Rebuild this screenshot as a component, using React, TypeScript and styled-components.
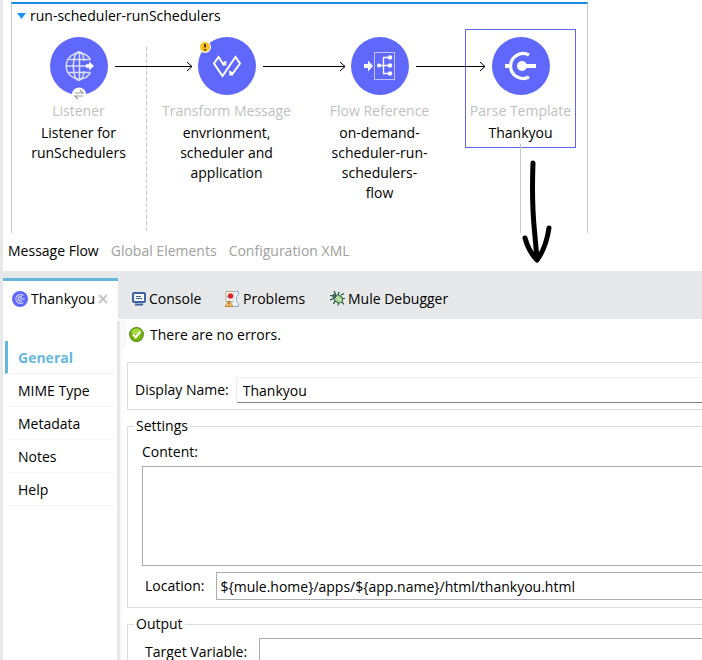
import React from "react";
import styled, { createGlobalStyle, css } from "styled-components";

const Global = createGlobalStyle`
  *, *::before, *::after { box-sizing: border-box; }
  body { margin: 0; background: #fff; }
  body, button, input, textarea {
    font-family: "Open Sans", "Noto Sans", sans-serif;
    font-size: 14px;
    line-height: 20px;
    color: #000;
  }
  button { padding: 0; border: 0; background: none; cursor: pointer; }
`;

const Window = styled.div`
  display: flex;
  flex-direction: column;
  height: 100vh;
  overflow: hidden;
  border-left: 3px solid #e7e8ea;
`;

/* ---------- Flow canvas ---------- */

const Canvas = styled.section`
  flex: none;
  padding: 2px 0 8px 8px;
`;

const Lane = styled.div`
  position: relative;
  width: 577px;
  height: 231px;
  border: solid #c8c8c8;
  border-width: 2px 1px 0;
  border-top-color: #1a8ceb;
`;

const LaneTitle = styled.button`
  display: flex;
  align-items: center;
  gap: 4px;
  padding: 2px 5px;
`;

const LaneArt = styled.svg`
  position: absolute;
  left: -1px;
  top: 0;
  overflow: visible;
  pointer-events: none;
`;

const Node = styled.div<{ $x: number; $selected?: boolean }>`
  position: absolute;
  top: 25px;
  left: ${(p) => p.$x}px;
  width: 111px;
  height: 119px;
  border: 1px solid ${(p) => (p.$selected ? "#5f66e8" : "transparent")};
  display: flex;
  flex-direction: column;
  align-items: center;
  padding-top: 7px;
  text-align: center;
`;

const NodeType = styled.span`
  margin: 6px 0 2px;
  flex: none;
  color: #bfbfbf;
  white-space: nowrap;
`;

const NodeName = styled.span`
  flex: none;
  white-space: pre-line;
`;

const NodeIcon = styled.svg`
  flex: none;
  overflow: visible;
`;

const Sketch = styled.svg`
  position: absolute;
  left: 508px;
  top: 153px;
  overflow: visible;
  pointer-events: none;
`;

const ViewTabs = styled.nav`
  flex: none;
  display: flex;
  gap: 12px;
  height: 30px;
  padding-left: 5px;
`;

const ViewTab = styled.button<{ $active?: boolean }>`
  height: 20px;
  color: ${(p) => (p.$active ? "#000" : "#a0a0a0")};
`;

/* ---------- Lower panel ---------- */

const TabBar = styled.div`
  flex: none;
  display: flex;
  height: 48px;
  padding-top: 7px;
  background: #e7e8ea;
`;

const PanelTab = styled.button<{ $active?: boolean; $width: number }>`
  display: flex;
  align-items: center;
  gap: 3px;
  width: ${(p) => p.$width}px;
  white-space: nowrap;
  ${(p) =>
    p.$active &&
    css`
      padding-left: 9px;
      margin-right: 14px;
      padding-bottom: 3px;
      border-top: 3px solid #67b7dc;
      background: #fff;
    `}
`;

const Panel = styled.div`
  flex: 1;
  min-height: 0;
  display: flex;
  padding-top: 2px;
`;

const Sidebar = styled.nav`
  flex: none;
  width: 117px;
  padding: 20px 1px 0 2px;
  border-right: 3px solid #e7e7e7;
`;

const SideItem = styled.button<{ $active?: boolean }>`
  display: block;
  width: 100%;
  height: 33px;
  padding-top: 2px;
  padding-left: ${(p) => (p.$active ? 10 : 13)}px;
  text-align: left;
  border-bottom: 1px solid #f5f5f5;
  ${(p) =>
    p.$active &&
    css`
      color: #67b7dc;
      font-weight: 700;
      border-left: 3px solid #67b7dc;
    `}
`;

const Form = styled.form`
  flex: 1;
  min-width: 0;
  border-left: 2px solid #f8f8f8;
`;

const Status = styled.div`
  display: flex;
  align-items: center;
  gap: 6px;
  height: 26px;
  padding-top: 1px;
  padding-left: 3px;
  border-left: 4px solid #f8f8f8;
`;

const Group = styled.fieldset<{ $spaced?: boolean }>`
  min-width: 0;
  margin: ${(p) => (p.$spaced ? "6px 0 0 5px" : "15px 0 0 5px")};
  padding: ${(p) => (p.$spaced ? "4px 0 7px 6px" : "14px 0 6px 7px")};
  border: 1px solid #dcdcdc;
  border-right: 0;
`;

const Legend = styled.legend`
  padding: 0 2px;
`;

const Field = styled.div<{ $indent?: boolean; $gap: number }>`
  display: flex;
  align-items: center;
  gap: ${(p) => p.$gap}px;
  padding-left: ${(p) => (p.$indent ? 11 : 0)}px;
`;

const FieldLabel = styled.label`
  flex: none;
`;

const LineInput = styled.input`
  flex: 1;
  min-width: 0;
  height: 26px;
  padding: 0 6px;
  border: solid #ececec;
  border-width: 1px 0 1px 1px;
  border-bottom-color: #808080;
  border-radius: 2px 0 0 2px;
  outline: 0;
`;

const BoxInput = styled.input`
  flex: 1;
  min-width: 0;
  height: 28px;
  padding: 0 3px;
  border: 1px solid #ababb0;
  border-right: 0;
  outline: 0;
`;

const Content = styled.div`
  display: flex;
  flex-direction: column;
  gap: 4px;
  padding: 2px 0 6px 8px;
`;

const TextBox = styled.textarea`
  height: 100px;
  border: 1px solid #ababb0;
  border-right: 0;
  resize: none;
  outline: 0;
`;

/* ---------- Icons ---------- */

const Disc = ({ children }: { children: React.ReactNode }) => (
  <NodeIcon width="58" height="58" viewBox="0 0 58 58" aria-hidden="true">
    <circle cx="29" cy="29" r="29" fill="#5f68fb" />
    {children}
  </NodeIcon>
);

const Warning = () => (
  <g>
    <circle cx="7" cy="10" r="6" fill="#fff" />
    <circle cx="7" cy="10" r="5" fill="#f8c022" />
    <path d="M7 7v3.6M7 12v1.6" stroke="#3d3209" strokeWidth="1.8" />
  </g>
);

const ListenerIcon = () => (
  <Disc>
    <g fill="none" stroke="#dddffe" strokeWidth="1.5">
      <path d="M40.5 22.5A13 13 0 1 0 40.5 35.5" />
      <path d="M34 24C33 12 26 12 24 22Q22.500 29 24 36C26 46 33 46 34 34" />
      <path d="M29.500 16V42M16.500 29H36M19 22.500H40.500M19 35.500H40.500" />
    </g>
    <path d="M36 27.200h3v-2.700l5 4.500-5 4.500v-2.700h-3z" fill="#fff" />
    <circle cx="29" cy="57.500" r="7" fill="#fff" />
    <path d="M25 56h8l-3-3M33 59h-8l3 3" fill="none" stroke="#999" strokeWidth="1.200" />
  </Disc>
);

const TransformIcon = () => (
  <Disc>
    <path
      d="M27.500 24.500 25.500 27.500 20.500 20 16 26.500 24.500 39 37.500 20 42 26.500 34 37.500 32 34.500"
      fill="none"
      stroke="#fff"
      strokeWidth="2"
    />
    <path d="M23.500 26.500l5-2.500-.5 5zM31 33.500l.5 5.500 4-3z" fill="#fff" />
    <Warning />
  </Disc>
);

const FlowRefIcon = () => (
  <Disc>
    <rect x="23.500" y="15.500" width="20" height="27" fill="none" stroke="#bfc2fd" />
    <path d="M13 27h4v-3.500l5 5.500-5 5.500V31h-4z" fill="#fff" />
    <path d="M28 28.500H39M38 20.500H32.500V36.500H38" fill="none" stroke="#fff" strokeWidth="1.300" />
    <g fill="#fff">
      <circle cx="28" cy="28.500" r="2" />
      <circle cx="39" cy="20.500" r="2.200" />
      <circle cx="39" cy="28.500" r="2.200" />
      <circle cx="39" cy="36.500" r="2.200" />
    </g>
  </Disc>
);

const ParseIcon = () => (
  <Disc>
    <path d="M37 18A12.500 12.500 0 1 0 37 40" fill="none" stroke="#fff" strokeWidth="3.200" />
    <path d="M13 29h4M30 29h14" stroke="#fff" strokeWidth="4" />
    <circle cx="30" cy="29" r="5" fill="#fff" />
  </Disc>
);

const SmallParse = () => (
  <svg width="16" height="16" viewBox="0 0 58 58" aria-hidden="true">
    <circle cx="29" cy="29" r="29" fill="#5f68fb" />
    <path d="M41 17A16 16 0 1 0 41 41M36 23A8 8 0 1 0 36 35M27 29H46" fill="none" stroke="#dfe1ff" strokeWidth="4" />
  </svg>
);

const ConsoleIcon = () => (
  <svg width="14" height="14" viewBox="0 0 14 14" aria-hidden="true">
    <rect x="1" y="1" width="12" height="9" rx="1" fill="#f4f8ff" stroke="#3d63a5" strokeWidth="2" />
    <path d="M4 4.500h5M4 6.500h6" stroke="#4b5f86" />
    <path d="M3 12.500h8" stroke="#3d63a5" strokeWidth="2" />
    <path d="M5 11.500h4" stroke="#9db8e0" />
  </svg>
);

const ProblemsIcon = () => (
  <svg width="15" height="16" viewBox="0 0 15 16" aria-hidden="true">
    <path d="M1 .5h8v10H1z" fill="#fff" stroke="#b7a985" />
    <path d="M9.500 .5h4v3l-2 2v5l2 2v3H8" fill="#eef4ff" stroke="#8facd6" />
    <path d="M1 5.500h8" stroke="#a9c2e8" />
    <circle cx="5.500" cy="5" r="2.700" fill="#e0242c" />
    <path d="M4 9.500 8 15.500H0z" fill="#fbd17a" stroke="#c98a2b" />
    <path d="M4 11v2.200M4 13.800v1" stroke="#6b4410" />
  </svg>
);

const BugIcon = () => (
  <svg width="15" height="15" viewBox="0 0 15 15" aria-hidden="true">
    <path
      d="M4 0l1.500 3M9 1l-1 3M0 4.500l4 .5M11 4l3-1.500M0 9l4-1.500M12 7.500h3M3.500 13l1.500-3M8 14.500l.5-3M12 11l2 2.500"
      fill="none"
      stroke="#1f4a3b"
      strokeWidth="1.200"
    />
    <ellipse cx="8.500" cy="8" rx="4.500" ry="3.600" transform="rotate(35 8.500 8)" fill="#a6d68f" stroke="#2b5b46" />
    <circle cx="4.500" cy="5" r="1.700" fill="#4f8068" stroke="#1f4a3b" />
    <path d="M6.500 6l4.500 4" stroke="#e2f5d3" />
  </svg>
);

const OkIcon = () => (
  <svg width="15" height="15" viewBox="0 0 15 15" aria-hidden="true">
    <circle cx="7.500" cy="7.500" r="6.800" fill="#7cb80c" stroke="#4f8a10" strokeWidth="1.200" />
    <ellipse cx="7.500" cy="4.600" rx="5" ry="3" fill="#a5d83f" />
    <path d="M4 7.500l2.700 2.700L11.200 5" fill="none" stroke="#fff" strokeWidth="2" />
  </svg>
);

const CloseIcon = () => (
  <svg width="10" height="10" viewBox="0 0 10 10" aria-hidden="true">
    <path d="M1 1l8 8M9 1l-8 8" stroke="#c4c4c4" strokeWidth="2" />
  </svg>
);

const nodes = [
  { x: 11, type: "Listener", name: "Listener for\nrunSchedulers", Icon: ListenerIcon },
  { x: 159, type: "Transform Message", name: "envrionment,\nscheduler and\napplication", Icon: TransformIcon },
  { x: 312, type: "Flow Reference", name: "on-demand-\nscheduler-run-\nschedulers-\nflow", Icon: FlowRefIcon },
  { x: 453, type: "Parse Template", name: "Thankyou", Icon: ParseIcon, selected: true },
];

const sideItems = ["General", "MIME Type", "Metadata", "Notes", "Help"];

export default function App() {
  return (
    <Window>
      <Global />
      <Canvas>
        <Lane>
          <LaneTitle type="button">
            <svg width="9" height="6" viewBox="0 0 9 6" aria-hidden="true">
              <path d="M0 0h9L4.500 6z" fill="#1495f5" />
            </svg>
            run-scheduler-runSchedulers
          </LaneTitle>
          {nodes.map(({ x, type, name, Icon, selected }) => (
            <Node key={type} $x={x} $selected={selected}>
              <Icon />
              <NodeType>{type}</NodeType>
              <NodeName>{name}</NodeName>
            </Node>
          ))}
          <LaneArt width="576" height="229" aria-hidden="true">
            <path d="M135.500 43V229" stroke="#c8c8c8" strokeDasharray="4 2" />
            <path d="M509.500 140V229" stroke="#c8c8c8" />
            <path
              d="M104 62.500H181M176 58l5 4.500-5 4.500M252 62.500H334M329 58l5 4.500-5 4.500M405 62.500H474M469 58l5 4.500-5 4.500"
              fill="none"
              stroke="#000"
              strokeWidth="1"
            />
          </LaneArt>
          <Sketch width="34" height="106" aria-hidden="true">
            <path
              d="M13 6C12 32 12.500 54 14.500 74L17 102M5 81Q9 95 17 103Q26 91 29 71"
              fill="none"
              stroke="#000"
              strokeWidth="5"
              strokeLinecap="round"
              strokeLinejoin="round"
            />
          </Sketch>
        </Lane>
      </Canvas>
      <ViewTabs aria-label="Editor views">
        <ViewTab type="button" $active>Message Flow</ViewTab>
        <ViewTab type="button">Global Elements</ViewTab>
        <ViewTab type="button">Configuration XML</ViewTab>
      </ViewTabs>
      <TabBar>
        <PanelTab type="button" $active $width={115}>
          <SmallParse />
          Thankyou
          <CloseIcon />
        </PanelTab>
        <PanelTab type="button" $width={93}>
          <ConsoleIcon />
          Console
        </PanelTab>
        <PanelTab type="button" $width={105}>
          <ProblemsIcon />
          Problems
        </PanelTab>
        <PanelTab type="button" $width={130}>
          <BugIcon />
          Mule Debugger
        </PanelTab>
      </TabBar>
      <Panel>
        <Sidebar aria-label="Sections">
          {sideItems.map((item, i) => (
            <SideItem key={item} type="button" $active={i === 0}>
              {item}
            </SideItem>
          ))}
        </Sidebar>
        <Form>
          <Status>
            <OkIcon />
            There are no errors.
          </Status>
          <Group>
            <Field $gap={7}>
              <FieldLabel htmlFor="display">Display Name:</FieldLabel>
              <LineInput id="display" defaultValue="Thankyou" />
            </Field>
          </Group>
          <Group $spaced>
            <Legend>Settings</Legend>
            <Content>
              <FieldLabel htmlFor="content">Content:</FieldLabel>
              <TextBox id="content" />
            </Content>
            <Field $indent $gap={12}>
              <FieldLabel htmlFor="location">Location:</FieldLabel>
              <BoxInput id="location" defaultValue="${mule.home}/apps/${app.name}/html/thankyou.html" />
            </Field>
          </Group>
          <Group $spaced>
            <Legend>Output</Legend>
            <Field $indent $gap={12}>
              <FieldLabel htmlFor="target">Target Variable:</FieldLabel>
              <BoxInput id="target" />
            </Field>
          </Group>
        </Form>
      </Panel>
    </Window>
  );
}
